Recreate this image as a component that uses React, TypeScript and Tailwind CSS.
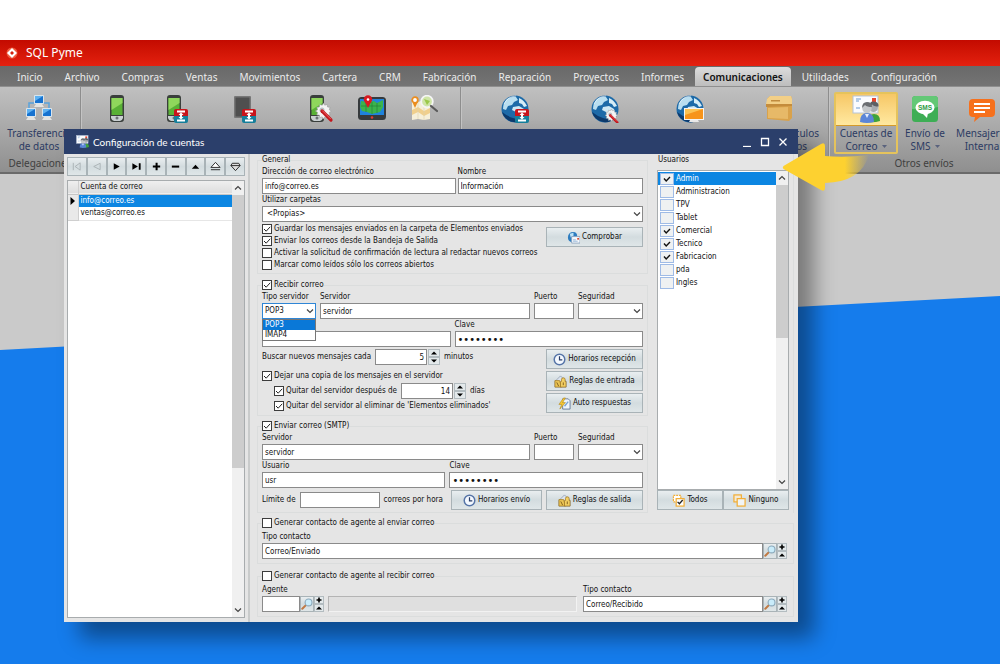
import { useId, useState, type ReactNode } from "react";

/* ---------- Ribbon icons ---------- */

function SyncBadge() {
  return (
    <g>
      <path d="M14 16q0-2 2-2h10q2 0 2 2v5H14z" fill="#c8141b" />
      <path d="M14 21h14v5q0 2-2 2H16q-2 0-2-2z" fill="#16809c" />
      <path
        d="M17 15.500h8v2h-8zM17 24.500h8v2h-8zM21 17.500l2.500 2.500h-1.500v2h1.500L21 24.500 18.500 22H20v-2h-1.500z"
        fill="#fff"
      />
    </g>
  );
}

function ToolBadge() {
  return (
    <g>
      <path
        d="M18.500 9l1.200 2.200 2.500-.8.3 2.600 2.600.3-.8 2.500 2.200 1.300-2.200 1.300.8 2.500-2.600.3-.3 2.500-2.500-.8-1.200 2.200-1.300-2.200-2.500.8-.3-2.500-2.600-.3.800-2.500-2.200-1.300 2.200-1.300-.8-2.500 2.600-.3.300-2.600 2.500.8z"
        fill="#f4f4f4"
        stroke="#9a9a9a"
        strokeWidth=".6"
      />
      <circle cx="17" cy="16" r="2.500" fill="#b9c2c6" />
      <path d="M17 17l9 9" stroke="#c3161c" strokeWidth="3.200" strokeLinecap="round" />
      <path d="M17.500 16.800l8 8" stroke="#f7787a" strokeWidth=".8" strokeLinecap="round" />
    </g>
  );
}

function PhoneBody() {
  return (
    <g>
      <rect x="1" y="0" width="14" height="27" rx="3" fill="#3a3f3c" />
      <rect x="2.500" y="3" width="11" height="17" fill="#59b136" />
      <path d="M2.500 3h11v5L2.500 15z" fill="#8fd75c" />
      <path d="M2 21h12v2q-1 3-3 3H5q-2 0-3-3z" fill="#c9cfd1" />
      <circle cx="8" cy="23" r="1.500" fill="#6c7375" />
    </g>
  );
}

function GlobeBody() {
  return (
    <g>
      <circle cx="14" cy="14" r="13.500" fill="#1d6aa8" />
      <path d="M1 17a13.500 13.500 0 0 0 25 3q-8 5-14 3T1 17z" fill="#0d3a6c" />
      <path d="M6 4q5-3 9-2l2 3-4 2-2 3-4 1-2 4-3-1q0-6 4-10z" fill="#b9def0" />
      <path d="M18 3q5 2 8 8l-3 1-2-3-3-1z" fill="#d6edf7" />
      <path d="M12 12l6-1 5 3 1 4-4 5-4-2-1-4-4-2z" fill="#cfe8f4" />
      <path d="M3 9Q7 1 15 1" stroke="#fff" strokeOpacity=".6" fill="none" />
    </g>
  );
}

const RibbonIcons = {
  network: (
    <svg viewBox="0 0 28 28" className="h-7 w-7" aria-hidden="true">
      <path d="M9 8H4v9M19 8h5v9" fill="none" stroke="#5aa3dc" strokeWidth="1.500" />
      {[
        [9, 0],
        [1, 13],
        [17, 13],
      ].map(([x, y]) => (
        <g key={x} transform={`translate(${x} ${y})`}>
          <rect x="0" y="0" width="10" height="9" rx="1" fill="#d9e4ec" />
          <rect x="1" y="1" width="8" height="7" fill="#1672d0" />
          <path d="M1 1h8L1 6z" fill="#5eb2f2" />
          <path d="M2 9h6l2 3H0z" fill="#e4e4e2" />
        </g>
      ))}
    </svg>
  ),
  phone: (
    <svg viewBox="0 0 16 28" className="h-7 w-4" aria-hidden="true">
      <PhoneBody />
    </svg>
  ),
  phoneSync: (
    <svg viewBox="0 0 24 28" className="h-7 w-6" aria-hidden="true">
      <PhoneBody />
      <g transform="translate(-6 0)">
        <SyncBadge />
      </g>
    </svg>
  ),
  deviceSync: (
    <svg viewBox="0 0 24 28" className="h-7 w-6" aria-hidden="true">
      <rect x="1" y="1" width="17" height="22" rx="1" fill="#777" />
      <rect x="2.500" y="2.500" width="14" height="19" fill="#4f4f4f" />
      <g transform="translate(-5 0)">
        <SyncBadge />
      </g>
    </svg>
  ),
  phoneTools: (
    <svg viewBox="0 0 28 28" className="h-7 w-7" aria-hidden="true">
      <g transform="translate(2 0)">
        <PhoneBody />
      </g>
      <g transform="translate(-2 -1)">
        <ToolBadge />
      </g>
    </svg>
  ),
  navigator: (
    <svg viewBox="0 0 28 28" className="h-7 w-7" aria-hidden="true">
      <rect x="0" y="2" width="28" height="23" rx="3.500" fill="#363a3c" />
      <rect x="2" y="4" width="24" height="16" fill="#1f83dc" />
      <path d="M3 6l7 1 6-1 3 2 6-3v7l-3 5-4 1-4 1-5-2-5-1-2-4z" fill="#3bb44c" />
      <path d="M3 11h20M8 6v11M14 7v12M19 8v10" stroke="#1e7a36" strokeWidth=".6" />
      <circle cx="10" cy="4.500" r="4.200" fill="#d81920" />
      <path d="M7 7l3 6 3-6z" fill="#d81920" />
      <circle cx="10" cy="4.500" r="1.300" fill="#fff" />
      <circle cx="14" cy="22.500" r="1.300" fill="#e23b2f" />
    </svg>
  ),
  mapSearch: (
    <svg viewBox="0 0 28 28" className="h-7 w-7" aria-hidden="true">
      <path d="M2 6l6 1 6-2 6 2v17l-6 1-6-1-6 1z" fill="#f6efd8" />
      <path d="M2 15l6-3 6 4 6-3v5l-6 3-6-4-6 3z" fill="#f0cf8c" />
      <path d="M8 7v17M14 5v20" stroke="#ddd2ae" strokeWidth=".6" />
      <circle cx="5" cy="5" r="2.800" fill="#fff" stroke="#eb8d1e" strokeWidth="1.800" />
      <path d="M2.500 7.500L5 13l2.500-5.500z" fill="#eb8d1e" />
      <circle cx="17" cy="6.500" r="5.800" fill="#cfe5a6" stroke="#f5f5f5" strokeWidth="1.800" />
      <path d="M14 4l6 2-3 4z" fill="#9bc84a" />
      <path d="M21 11l6 5" stroke="#5a5a5a" strokeWidth="2.200" strokeLinecap="round" />
    </svg>
  ),
  globeSync: (
    <svg viewBox="0 0 28 28" className="h-7 w-7" aria-hidden="true">
      <GlobeBody />
      <SyncBadge />
    </svg>
  ),
  globeTools: (
    <svg viewBox="0 0 28 28" className="h-7 w-7" aria-hidden="true">
      <GlobeBody />
      <g transform="translate(6 7) scale(.78)">
        <ToolBadge />
      </g>
    </svg>
  ),
  globeScreen: (
    <svg viewBox="0 0 28 28" className="h-7 w-7" aria-hidden="true">
      <GlobeBody />
      <rect x="8" y="13" width="20" height="12" fill="#f4f4f4" />
      <rect x="9" y="14" width="18" height="10" fill="#f7941a" />
      <path d="M9 14h18L9 20z" fill="#fcc353" />
      <path d="M14 25h8l1 2H13z" fill="#e9e9e9" />
    </svg>
  ),
  box: (
    <svg viewBox="0 0 28 28" className="h-7 w-7" aria-hidden="true">
      <path d="M2 4l3-3 21 0 1 3v19l-3 3-22-2z" fill="#d9a24b" />
      <path d="M2 4l3-3h21l1 3v5H1z" fill="#f2cf87" />
      <path d="M1 9h26v2L1 12z" fill="#c48c3c" />
      <path d="M3 13l20-1v12L3 23z" fill="#e7b968" />
      <rect x="6" y="5" width="9" height="1.500" fill="#c08b3e" />
    </svg>
  ),
  mailUsers: (
    <svg viewBox="0 0 28 28" className="h-7 w-7" aria-hidden="true">
      <rect x="1" y="1" width="25" height="17" fill="#fbfcfe" stroke="#b5c4d8" />
      <rect x="20" y="3" width="4" height="4" fill="#e8452c" />
      <path d="M4 4h5M4 6h3M4 13h4" stroke="#6c9bd0" />
      <path d="M16 27q0-8 6-8t6 7q-6 2-12 1z" fill="#3fa33b" />
      <circle cx="21.500" cy="12.500" r="4.500" fill="#a7abb0" />
      <path d="M17 12q0-6 5-5.500t4.500 5q-5 0-6-2z" fill="#5c5f64" />
      <path d="M8 27q0-9 7-9t7 9q-7 2-14 0z" fill="#5b86d8" />
      <path d="M13 19l2 4 2-4z" fill="#e6eefb" />
      <circle cx="15" cy="13.500" r="4.700" fill="#c4c7ca" />
      <path d="M10 13q0-6 5-6t5 5q-5 0-7-2z" fill="#6b6e72" />
    </svg>
  ),
  sms: (
    <svg viewBox="0 0 28 28" className="h-7 w-7" aria-hidden="true">
      <rect x="1" y="1" width="26" height="26" rx="3.500" fill="#3eae55" />
      <path d="M1 14V4.500Q1 1 4.500 1h19Q27 1 27 4.500V12Q14 15 1 14z" fill="#63c876" />
      <ellipse cx="14" cy="12.500" rx="9.500" ry="6.800" fill="#fff" />
      <path d="M11 18l5 5 1-5z" fill="#fff" />
      <text x="14" y="15" textAnchor="middle" fontSize="6.500" fontWeight="700" fill="#2f9c47" fontFamily="Liberation Sans, sans-serif">
        SMS
      </text>
    </svg>
  ),
  message: (
    <svg viewBox="0 0 28 28" className="h-7 w-7" aria-hidden="true">
      <path d="M5 4h18q4 0 4 4v10q0 4-4 4H12l-6 5 1-5H5q-4 0-4-4V8q0-4 4-4z" fill="#f6701c" />
      <path d="M6 9h16M6 13h16M6 17h11" stroke="#fff" strokeWidth="2" />
    </svg>
  ),
};

/* ---------- Small icons ---------- */

const small = "h-[13px] w-[13px] shrink-0";

const SmallIcons = {
  clock: (
    <svg viewBox="0 0 14 14" className={small} aria-hidden="true">
      <circle cx="7" cy="7" r="5.700" fill="#f4f9ff" stroke="#5675a8" strokeWidth="1.600" />
      <path d="M7 3.500V7.500h3" fill="none" stroke="#273c66" strokeWidth="1.300" />
    </svg>
  ),
  rules: (
    <svg viewBox="0 0 14 14" className={small} aria-hidden="true">
      <path d="M1 7l6-6 6 6v6H1z" fill="#dce4ef" stroke="#8b98ad" strokeWidth=".8" />
      <path d="M1 6h5l2 7H1z" fill="#eac454" stroke="#a37b22" strokeWidth=".8" />
      <path d="M8 5q0-2 2-2t2 2v2h1v6H7V7h1z" fill="#f2cf63" stroke="#9b7420" strokeWidth=".8" />
      <path d="M3 8l2 4M10 8v3" stroke="#7e5d1c" />
    </svg>
  ),
  reply: (
    <svg viewBox="0 0 14 14" className={small} aria-hidden="true">
      <path d="M5 2h6l2 2v9H5z" fill="#eef4fb" stroke="#5a6f92" strokeWidth=".9" />
      <path d="M7 10l4-5" stroke="#7ba4d4" strokeWidth="1.500" />
      <path d="M6 1L1 8h3l-2 5 6-7H5l3-5z" fill="#f7c832" stroke="#b0861b" strokeWidth=".6" />
    </svg>
  ),
  check: (
    <svg viewBox="0 0 14 14" className={small} aria-hidden="true">
      <path d="M7 1q-6 0-6 6 0 4 4 5V6h6q0-5-4-5z" fill="#2d7dc0" />
      <path d="M3 3l4-1v3L4 7z" fill="#bfe3f5" />
      <path d="M5 6h9v7H5z" fill="#f7f9fc" stroke="#7d97b8" strokeWidth=".8" />
      <path d="M11 7.500h2v1.800h-2z" fill="#d8482d" />
      <path d="M6.500 9.500h3M6.500 11h5" stroke="#7ea6cf" strokeWidth=".8" />
    </svg>
  ),
  all: (
    <svg viewBox="0 0 14 14" className={small} aria-hidden="true">
      <rect x="1.500" y="1.500" width="8" height="7" fill="#fff" stroke="#f2ad33" strokeWidth="1.300" strokeDasharray="2 1" />
      <rect x="4.500" y="5" width="8.500" height="8" fill="#fff" stroke="#f2ad33" strokeWidth="1.300" />
      <path d="M6 8.500l2 2 3.500-4" fill="none" stroke="#222" strokeWidth="1.400" />
    </svg>
  ),
  none: (
    <svg viewBox="0 0 14 14" className={small} aria-hidden="true">
      <rect x="1" y="1" width="8" height="7.500" fill="#f4ead6" stroke="#f2ad33" strokeWidth="1.300" />
      <rect x="4.500" y="5" width="8.500" height="8" fill="#f1f4f5" stroke="#f2ad33" strokeWidth="1.300" />
    </svg>
  ),
  lens: (
    <svg viewBox="0 0 14 14" className="h-3 w-3" aria-hidden="true">
      <path d="M1.500 12.500L6 8" stroke="#c07a45" strokeWidth="2.400" strokeLinecap="round" />
      <circle cx="8.800" cy="5.200" r="4" fill="#c9ecfa" stroke="#8ba9bb" strokeWidth="1.300" />
    </svg>
  ),
};

function Chevron({ up = false }: { up?: boolean }) {
  return (
    <svg viewBox="0 0 8 6" className="h-1.5 w-2" aria-hidden="true">
      <path d={up ? "M1 4.500l3-3 3 3" : "M1 1.500l3 3 3-3"} fill="none" stroke="#444" strokeWidth="1.200" />
    </svg>
  );
}

/* ---------- Controls ---------- */

const face = "border border-[#a9b3b7] bg-linear-to-b from-[#e9eef0] via-[#d3dcdf] to-[#dfe6e8]";

function Check({ label, on = false }: { label: string; on?: boolean }) {
  const [checked, setChecked] = useState(on);
  return (
    <label className="flex h-3 items-center gap-0.5 whitespace-nowrap">
      <span className="grid shrink-0">
        <input
          type="checkbox"
          checked={checked}
          onChange={() => setChecked(!checked)}
          className="col-start-1 row-start-1 h-2.5 w-2.5 appearance-none border border-[#3c3c3c] bg-white"
        />
        {checked && (
          <svg viewBox="0 0 10 10" className="pointer-events-none col-start-1 row-start-1 h-2.5 w-2.5" aria-hidden="true">
            <path d="M2 5l2.200 2.200L8.200 2.800" fill="none" stroke="#222" strokeWidth="1" />
          </svg>
        )}
      </span>
      {label}
    </label>
  );
}

const box = "h-4 w-full min-w-0 border border-[#8a8a8a] bg-white px-0.5 outline-none";

function Field({ label, value = "" }: { label: string; value?: string }) {
  const id = useId();
  return (
    <div className="min-w-0">
      <label htmlFor={id} className="block h-3 whitespace-nowrap">
        {label}
      </label>
      <input id={id} defaultValue={value} className={box} />
    </div>
  );
}

function Secret({ label }: { label: string }) {
  const id = useId();
  return (
    <div className="min-w-0">
      <label htmlFor={id} className="block h-3">
        {label}
      </label>
      <input id={id} type="password" defaultValue="12345678" className={`${box} text-[11px]`} />
    </div>
  );
}

function Select({
  label,
  options,
  open = false,
  indent = "pl-0.5",
}: {
  label: string;
  options: string[];
  open?: boolean;
  indent?: string;
}) {
  const id = useId();
  return (
    <div className="min-w-0">
      <label htmlFor={id} className="block h-3 whitespace-nowrap">
        {label}
      </label>
      <div className="relative grid">
        <select
          id={id}
          className={`col-start-1 row-start-1 h-4 w-full appearance-none border bg-white outline-none ${indent} ${
            open ? "border-[#2f86d6]" : "border-[#8a8a8a]"
          }`}
        >
          {options.map((o) => (
            <option key={o}>{o}</option>
          ))}
        </select>
        <span className="pointer-events-none col-start-1 row-start-1 mr-0.5 self-center justify-self-end">
          <Chevron />
        </span>
        {open && (
          <ul role="listbox" aria-label={label} className="absolute inset-x-0 top-4 z-10 border border-[#777] bg-white leading-[10px]">
            {options.map((o, i) => (
              <li
                key={o}
                role="option"
                aria-selected={i === 0}
                className={i === 0 ? "bg-[#0a78d7] pl-0.5 text-white" : "pl-0.5"}
              >
                {o}
              </li>
            ))}
          </ul>
        )}
      </div>
    </div>
  );
}

function PushButton({ icon, children }: { icon: ReactNode; children: ReactNode }) {
  return (
    <button type="button" className={`flex h-5 w-full items-center justify-center gap-0.5 whitespace-nowrap ${face}`}>
      {icon}
      {children}
    </button>
  );
}

function Spinner({ name }: { name: string }) {
  return (
    <span className="flex h-4 w-3 shrink-0 flex-col">
      {["más", "menos"].map((way, i) => (
        <button
          key={way}
          type="button"
          aria-label={`${name}: ${way}`}
          className="grid flex-1 place-items-center border border-[#b3bcc0] bg-[#e3e9eb]"
        >
          <svg viewBox="0 0 6 4" className="h-1 w-1.5" aria-hidden="true">
            <path d={i === 0 ? "M0 3.500L3 .5l3 3z" : "M0 .5l3 3 3-3z"} fill="#000" />
          </svg>
        </button>
      ))}
    </span>
  );
}

function Lookup({ name }: { name: string }) {
  return (
    <span className="flex shrink-0">
      <button type="button" aria-label={`Buscar ${name}`} className={`grid h-4 w-3.5 place-items-center ${face}`}>
        {SmallIcons.lens}
      </button>
      <span className="flex h-4 w-2.5 flex-col">
        <button type="button" aria-label={`Añadir ${name}`} className="grid flex-1 place-items-center border border-[#b3bcc0] bg-[#e3e9eb]">
          <svg viewBox="0 0 6 6" className="h-1.5 w-1.5" aria-hidden="true">
            <path d="M3 .5v5M.5 3h5" stroke="#000" strokeWidth="1.600" />
          </svg>
        </button>
        <button type="button" aria-label={`Abrir ${name}`} className="grid flex-1 place-items-center border border-[#b3bcc0] bg-[#e3e9eb]">
          <svg viewBox="0 0 6 4" className="h-1 w-1.5" aria-hidden="true">
            <path d="M0 3.500L3 .5l3 3z" fill="#000" />
          </svg>
        </button>
      </span>
    </span>
  );
}

function Group({ legend, children }: { legend: ReactNode; children: ReactNode }) {
  return (
    <fieldset className="min-w-0 border border-[#dbdddd] px-1 pb-0.5">
      <legend className="h-3">{legend}</legend>
      {children}
    </fieldset>
  );
}

function ScrollBar({ thumb }: { thumb: string }) {
  return (
    <div className="flex w-3 shrink-0 flex-col items-center bg-[#f0f0f0]" aria-hidden="true">
      <span className="grid h-3.5 place-items-center">
        <Chevron up />
      </span>
      <span className={`w-full bg-[#cdcdcd] ${thumb}`} />
      <span className="mt-auto grid h-3.5 place-items-center">
        <Chevron />
      </span>
    </div>
  );
}

/* ---------- Ribbon ---------- */

const tabs = [
  "Inicio",
  "Archivo",
  "Compras",
  "Ventas",
  "Movimientos",
  "Cartera",
  "CRM",
  "Fabricación",
  "Reparación",
  "Proyectos",
  "Informes",
  "Comunicaciones",
  "Utilidades",
  "Configuración",
];

function RibbonButton({
  icon,
  width,
  name,
  children,
}: {
  icon: ReactNode;
  width: string;
  name?: string;
  children?: ReactNode;
}) {
  return (
    <button
      type="button"
      aria-label={name}
      className={`flex shrink-0 flex-col items-center pt-2 leading-[13px] whitespace-nowrap text-[#2c3b63] ${width}`}
    >
      <span className="mb-1 grid h-7 place-items-center">{icon}</span>
      {children}
    </button>
  );
}

function RibbonGroup({ width, title, children }: { width: string; title?: string; children: ReactNode }) {
  return (
    <section className={`flex shrink-0 flex-col border-r border-[#8d8d8d] shadow-[1px_0_0_#c4c4c4] ${width}`}>
      <div className="flex h-[69px]">{children}</div>
      <h2 className="h-4 text-center leading-[14px] text-[#3f3f3f]">{title}</h2>
    </section>
  );
}

function DropMark() {
  return (
    <svg viewBox="0 0 5 3" className="mb-0.5 ml-1 inline h-[3px] w-[5px]" aria-hidden="true">
      <path d="M0 0h5L2.500 3z" fill="#59627d" />
    </svg>
  );
}

function Ribbon() {
  return (
    <header className="text-[10px]">
      <div className="flex h-[26px] items-center gap-2 bg-linear-to-b from-[#c30a00] to-[#e4200f] pl-1.5 text-xs text-white">
        <svg viewBox="0 0 12 12" className="h-3 w-3" aria-hidden="true">
          <circle cx="6" cy="6" r="5.500" fill="#ef5a3e" />
          <path d="M6 1L11 6 6 11 1 6z" fill="#fff" />
          <path d="M6 4l2 2-2 2-2-2z" fill="#d3200f" />
        </svg>
        <h1>SQL Pyme</h1>
      </div>
      <nav className="flex h-[21px] items-stretch border-b border-[#8f8f8f] bg-linear-to-b from-[#696969] to-[#747474] pl-1.5 text-[#ececec]">
        {tabs.map((t) => (
          <a
            key={t}
            href="#"
            className={
              t === "Comunicaciones"
                ? "mt-px rounded-t-sm bg-linear-to-b from-[#dcdcdc] to-[#bdbdbd] px-2 leading-5 font-semibold text-[#111]"
                : "px-[11px] leading-[22px]"
            }
          >
            {t}
          </a>
        ))}
      </nav>
      <div className="flex overflow-hidden border-b-2 border-[#6a6a6a] bg-linear-to-b from-[#c0c0c0] via-[#a8a8a8] to-[#8f8f8f]">
        <RibbonGroup width="w-[81px]" title="Delegaciones">
          <RibbonButton icon={RibbonIcons.network} width="w-[78px]">
            <span>Transferencia</span>
            <span>de datos</span>
          </RibbonButton>
        </RibbonGroup>
        <RibbonGroup width="w-[380px]">
          <RibbonButton icon={RibbonIcons.phone} width="w-[72px]" name="Teléfono" />
          <RibbonButton icon={RibbonIcons.phoneSync} width="w-[50px]" name="Sincronizar teléfono" />
          <RibbonButton icon={RibbonIcons.deviceSync} width="w-[84px]" name="Sincronizar dispositivo" />
          <RibbonButton icon={RibbonIcons.phoneTools} width="w-[68px]" name="Configurar teléfono" />
          <RibbonButton icon={RibbonIcons.navigator} width="w-[34px]" name="Navegador" />
          <RibbonButton icon={RibbonIcons.mapSearch} width="w-[70px]" name="Buscar en el mapa" />
        </RibbonGroup>
        <RibbonGroup width="w-[368px]">
          <RibbonButton icon={RibbonIcons.globeSync} width="w-[108px]" name="Sincronizar web" />
          <RibbonButton icon={RibbonIcons.globeTools} width="w-[72px]" name="Configurar web" />
          <RibbonButton icon={RibbonIcons.globeScreen} width="w-[98px]" name="Ver web" />
          <RibbonButton icon={RibbonIcons.box} width="w-[80px]">
            <span className="self-end">de artículos</span>
            <span className="self-end pr-3">web y grupos</span>
          </RibbonButton>
        </RibbonGroup>
        <RibbonGroup width="w-[191px]" title="Otros envíos">
          <button
            type="button"
            className="ml-[5px] mt-[5px] flex h-[62px] w-16 shrink-0 flex-col items-center rounded-xs border-2 border-[#e5c35c] leading-[13px] whitespace-nowrap text-[#2c3b63]"
          >
            <span className="mb-px grid w-full place-items-center border-b border-[#d59a2a] bg-linear-to-b from-[#f6c765] to-[#ffe9a0] pt-px pb-0.5">
              {RibbonIcons.mailUsers}
            </span>
            <span>Cuentas de</span>
            <span>
              Correo
              <DropMark />
            </span>
          </button>
          <RibbonButton icon={RibbonIcons.sms} width="w-[54px]">
            <span>Envío de</span>
            <span>
              SMS
              <DropMark />
            </span>
          </RibbonButton>
          <RibbonButton icon={RibbonIcons.message} width="w-[60px]">
            <span>Mensajería</span>
            <span>Interna</span>
          </RibbonButton>
        </RibbonGroup>
      </div>
    </header>
  );
}

/* ---------- Dialog ---------- */

const navigatorButtons: { name: string; off?: boolean; draw: ReactNode }[] = [
  { name: "Primero", off: true, draw: <path d="M2.500 2v8M10 2L4.500 6 10 10z" fill="none" stroke="#a9b0b3" /> },
  { name: "Anterior", off: true, draw: <path d="M10 2.500L3 6l7 3.500z" fill="none" stroke="#a9b0b3" /> },
  { name: "Siguiente", draw: <path d="M3 2.500L9.500 6 3 9.500z" /> },
  { name: "Último", draw: <path d="M1.500 2.500L7.500 6l-6 3.500zM8.500 2.500h2v7h-2z" /> },
  { name: "Añadir", draw: <path d="M5 2h2.200v3H10v2.200H7.200v3H5v-3H2V5h3z" /> },
  { name: "Eliminar", draw: <path d="M2 5h8v2.200H2z" /> },
  { name: "Editar", draw: <path d="M2 8.500L6 4l4 4.500z" /> },
  { name: "Guardar", draw: <path d="M1 7L6 1.500 11 7zM1 9.500h10" fill="#fff" stroke="#222" /> },
  { name: "Cancelar", draw: <path d="M2.500 2.500h7L11 5 6 10.500 1 5zM1 5h10" fill="#ddd" stroke="#222" /> },
];

function AccountList() {
  return (
    <aside className="flex w-[186px] shrink-0 flex-col border-r-2 border-[#c9cbcb] px-[3px] pt-[3px] pb-1">
      <div className="flex" role="toolbar" aria-label="Cuentas">
        {navigatorButtons.map((b) => (
          <button
            key={b.name}
            type="button"
            aria-label={b.name}
            disabled={b.off}
            className={`grid h-[19px] flex-1 place-items-center ${face}`}
          >
            <svg viewBox="0 0 12 12" className="h-[11px] w-[11px]" aria-hidden="true">
              {b.draw}
            </svg>
          </button>
        ))}
      </div>
      <div className="mt-1 flex flex-1 border border-[#a8acae] bg-white">
        <div className="flex-1">
          <table className="w-full border-collapse text-left">
            <thead>
              <tr className="h-[13px] border-b border-[#c6c6c6] bg-linear-to-b from-[#efefef] to-[#dedede]">
                <th className="w-2.5 border-r border-[#cfcfcf] p-0" aria-label="Selección" />
                <th className="p-0 pl-0.5 font-normal">Cuenta de correo</th>
              </tr>
            </thead>
            <tbody>
              <tr className="h-[13px]">
                <td className="border-r border-[#cfcfcf] bg-[#e9e9e9] p-0">
                  <svg viewBox="0 0 6 8" className="ml-0.5 h-2 w-1.5" aria-hidden="true">
                    <path d="M.5 0L5 4 .5 8z" />
                  </svg>
                </td>
                <td className="bg-[#0c86e2] p-0 pl-0.5 text-white">info@correo.es</td>
              </tr>
              <tr className="h-[13px]">
                <td className="border-r border-b border-[#cfcfcf] bg-[#e9e9e9] p-0" />
                <td className="border-b border-[#e6e6e6] p-0 pl-0.5">ventas@correo.es</td>
              </tr>
            </tbody>
          </table>
        </div>
        <ScrollBar thumb="h-[273px]" />
      </div>
    </aside>
  );
}

const users = [
  { name: "Admin", on: true },
  { name: "Administracion", on: false },
  { name: "TPV", on: false },
  { name: "Tablet", on: false },
  { name: "Comercial", on: true },
  { name: "Tecnico", on: true },
  { name: "Fabricacion", on: true },
  { name: "pda", on: false },
  { name: "Ingles", on: false },
];

function UserRow({ name, on, active }: { name: string; on: boolean; active: boolean }) {
  const [checked, setChecked] = useState(on);
  return (
    <li>
      <label className={`flex h-[13px] items-center gap-0.5 pl-0.5 ${active ? "bg-[#0c86e2] text-white" : ""}`}>
        <span className="grid shrink-0 place-items-center">
          <input
            type="checkbox"
            checked={checked}
            onChange={() => setChecked(!checked)}
            className="col-start-1 row-start-1 h-3 w-3.5 appearance-none border border-[#9fbbe6] bg-[#eff1f2]"
          />
          {checked && (
            <svg viewBox="0 0 8 8" className="pointer-events-none col-start-1 row-start-1 h-2 w-2" aria-hidden="true">
              <path d="M1 3.500l2.200 2.500L7 2" fill="none" stroke="#111" strokeWidth="1.400" />
            </svg>
          )}
        </span>
        {name}
      </label>
    </li>
  );
}

function Users() {
  return (
    <section className="flex w-[139px] shrink-0 flex-col border-r border-[#dbdddd] pr-1">
      <h3 className="mb-1 h-3 pl-[3px]">Usuarios</h3>
      <div className="ml-0.5 flex flex-1 border border-[#a8acae] bg-white">
        <ul className="flex-1 py-px">
          {users.map((u, i) => (
            <UserRow key={u.name} name={u.name} on={u.on} active={i === 0} />
          ))}
        </ul>
        <ScrollBar thumb="h-[153px]" />
      </div>
      <div className="ml-0.5 grid grid-cols-2 pb-[3px]">
        <PushButton icon={SmallIcons.all}>Todos</PushButton>
        <PushButton icon={SmallIcons.none}>Ninguno</PushButton>
      </div>
    </section>
  );
}

function ServerForm() {
  return (
    <div className="flex min-w-0 flex-1 flex-col">
      <Group legend="General">
        <div className="grid grid-cols-[193fr_185fr] gap-x-0.5">
          <Field label="Dirección de correo electrónico" value="info@correo.es" />
          <Field label="Nombre" value="Información" />
        </div>
        <Select label="Utilizar carpetas" options={["<Propias>"]} indent="pl-1" />
        <div className="grid grid-cols-[minmax(0,1fr)_97px] pt-px">
          <div className="col-start-1 row-start-1">
            <Check label="Guardar los mensajes enviados en la carpeta de Elementos enviados" on />
            <Check label="Enviar los correos desde la Bandeja de Salida" on />
            <Check label="Activar la solicitud de confirmación de lectura al redactar nuevos correos" />
            <Check label="Marcar como leídos sólo los correos abiertos" />
          </div>
          <div className="col-start-2 row-start-1 pt-1">
            <PushButton icon={SmallIcons.check}>Comprobar</PushButton>
          </div>
        </div>
      </Group>

      <div className="mt-[5px]">
        <Group legend={<Check label="Recibir correo" on />}>
          <div className="grid grid-cols-[54px_1fr_40px_65px] gap-x-1">
            <Select label="Tipo servidor" options={["POP3", "IMAP4"]} open />
            <Field label="Servidor" value="servidor" />
            <Field label="Puerto" />
            <Select label="Seguridad" options={[""]} />
          </div>
          <div className="grid grid-cols-2 items-end gap-x-1">
            <input aria-label="Usuario" className={box} />
            <Secret label="Clave" />
          </div>
          <div className="flex items-start justify-between pt-0.5">
            <div>
              <div className="flex h-4 items-center gap-1 whitespace-nowrap">
                <label htmlFor="poll">Buscar nuevos mensajes cada</label>
                <span className="flex gap-px">
                  <input id="poll" defaultValue="5" className="h-4 w-[52px] border border-[#8a8a8a] bg-white px-0.5 text-right" />
                  <Spinner name="Minutos" />
                </span>
                minutos
              </div>
              <div className="pt-[5px] pb-px">
                <Check label="Dejar una copia de los mensajes en el servidor" on />
              </div>
              <div className="flex h-4 items-center gap-1 pl-3">
                <Check label="Quitar del servidor después de" on />
                <span className="flex gap-px">
                  <input
                    aria-label="Días antes de quitar del servidor"
                    defaultValue="14"
                    className="h-4 w-[52px] border border-[#8a8a8a] bg-white px-0.5 text-right"
                  />
                  <Spinner name="Días" />
                </span>
                días
              </div>
              <div className="pt-px pl-3">
                <Check label="Quitar del servidor al eliminar de 'Elementos eliminados'" on />
              </div>
            </div>
            <div className="flex w-[97px] shrink-0 flex-col gap-0.5">
              <PushButton icon={SmallIcons.clock}>Horarios recepción</PushButton>
              <PushButton icon={SmallIcons.rules}>Reglas de entrada</PushButton>
              <PushButton icon={SmallIcons.reply}>Auto respuestas</PushButton>
            </div>
          </div>
        </Group>
      </div>

      <div className="mt-1">
        <Group legend={<Check label="Enviar correo (SMTP)" on />}>
          <div className="grid grid-cols-[1fr_40px_65px] gap-x-1">
            <Field label="Servidor" value="servidor" />
            <Field label="Puerto" />
            <Select label="Seguridad" options={[""]} />
          </div>
          <div className="grid grid-cols-[183fr_193fr] gap-x-1">
            <Field label="Usuario" value="usr" />
            <Secret label="Clave" />
          </div>
          <div className="flex items-center gap-1 pt-0.5 whitespace-nowrap">
            <div className="flex flex-1 items-center gap-1">
              <label htmlFor="limit">Límite de</label>
              <input id="limit" className="h-4 w-20 border border-[#8a8a8a] bg-white px-0.5" />
              correos por hora
            </div>
            <div className="w-[91px]">
              <PushButton icon={SmallIcons.clock}>Horarios envío</PushButton>
            </div>
            <div className="w-[97px]">
              <PushButton icon={SmallIcons.rules}>Reglas de salida</PushButton>
            </div>
          </div>
        </Group>
      </div>
    </div>
  );
}

function ContactForms() {
  return (
    <>
      <div className="mt-1">
        <Group legend={<Check label="Generar contacto de agente al enviar correo" />}>
          <div className="flex items-end pt-0.5 pr-0.5 pb-0.5">
            <div className="min-w-0 flex-1">
              <Field label="Tipo contacto" value="Correo/Enviado" />
            </div>
            <Lookup name="tipo de contacto enviado" />
          </div>
        </Group>
      </div>
      <div className="mt-1.5">
        <Group legend={<Check label="Generar contacto de agente al recibir correo" />}>
          <div className="flex items-end pt-0.5 pr-0.5 pb-0.5">
            <div className="w-[38px]">
              <Field label="Agente" />
            </div>
            <Lookup name="agente" />
            <input
              aria-label="Nombre del agente"
              disabled
              className="mx-1 h-4 min-w-0 flex-1 border border-[#b4b4b4] border-r-[#f2f2f2] border-b-[#f2f2f2] bg-[#dfdfdf]"
            />
            <div className="ml-0.5 w-[180px]">
              <Field label="Tipo contacto" value="Correo/Recibido" />
            </div>
            <Lookup name="tipo de contacto recibido" />
          </div>
        </Group>
      </div>
    </>
  );
}

function Dialog() {
  return (
    <section
      role="dialog"
      aria-labelledby="dialog-title"
      className="absolute top-[129px] right-[202px] left-16 min-w-[700px] bg-[#e5e5e5] font-['DejaVu_Sans_Condensed','DejaVu_Sans',sans-serif] text-[8px] leading-3 text-[#111] shadow-[16px_16px_20px_rgba(0,0,0,0.4)]"
    >
      <header className="flex h-[25px] items-center bg-[#2b3f6b] pr-2.5 pl-2.5 text-white">
        <span className="grid h-4 w-4 place-items-center [&>svg]:h-[13px] [&>svg]:w-[13px]">{RibbonIcons.mailUsers}</span>
        <h2 id="dialog-title" className="ml-[3px] flex-1 font-['Lato',sans-serif] text-[10px]">
          Configuración de cuentas
        </h2>
        <div className="flex gap-2">
          {[
            { name: "Minimizar", d: "M1 9.500h8" },
            { name: "Maximizar", d: "M1.500 1.500h7v7h-7z" },
            { name: "Cerrar", d: "M1.500 1.500l7 7M8.500 1.500l-7 7" },
          ].map((b) => (
            <button key={b.name} type="button" aria-label={b.name}>
              <svg viewBox="0 0 10 10" className="h-2.5 w-2.5" aria-hidden="true">
                <path d={b.d} fill="none" stroke="#fff" strokeWidth="1.300" />
              </svg>
            </button>
          ))}
        </div>
      </header>
      <div className="flex">
        <AccountList />
        <form className="min-w-0 flex-1 pr-1 pb-[5px] pl-[7px]">
          <div className="flex gap-[7px]">
            <ServerForm />
            <Users />
          </div>
          <ContactForms />
        </form>
      </div>
    </section>
  );
}

export default function App() {
  return (
    <div className="relative flex min-h-screen flex-col overflow-hidden bg-white pt-10 font-['Noto_Sans',sans-serif]">
      <Ribbon />
      <main className="flex flex-1 flex-col bg-[#cacaca] pt-[122px]">
        <div className="flex-1 bg-[#157cec] [clip-path:polygon(0_54px,100%_0,100%_100%,0_100%)]" />
      </main>
      <Dialog />
      <svg viewBox="0 0 90 52" className="absolute top-[141px] right-[128px] h-[52px] w-[90px]" aria-hidden="true">
        <defs>
          <linearGradient id="tail" x1="0" x2="1" y1="0" y2="0">
            <stop offset="0.72" stopColor="#fdd130" />
            <stop offset="1" stopColor="#fdd130" stopOpacity="0" />
          </linearGradient>
        </defs>
        <path d="M1.500 28Q0 26.500 1.500 25L39 3Q43 1 43 5v10q20 2 44-1-8 27-44 28v5q0 4-4 2z" fill="url(#tail)" />
      </svg>
    </div>
  );
}
